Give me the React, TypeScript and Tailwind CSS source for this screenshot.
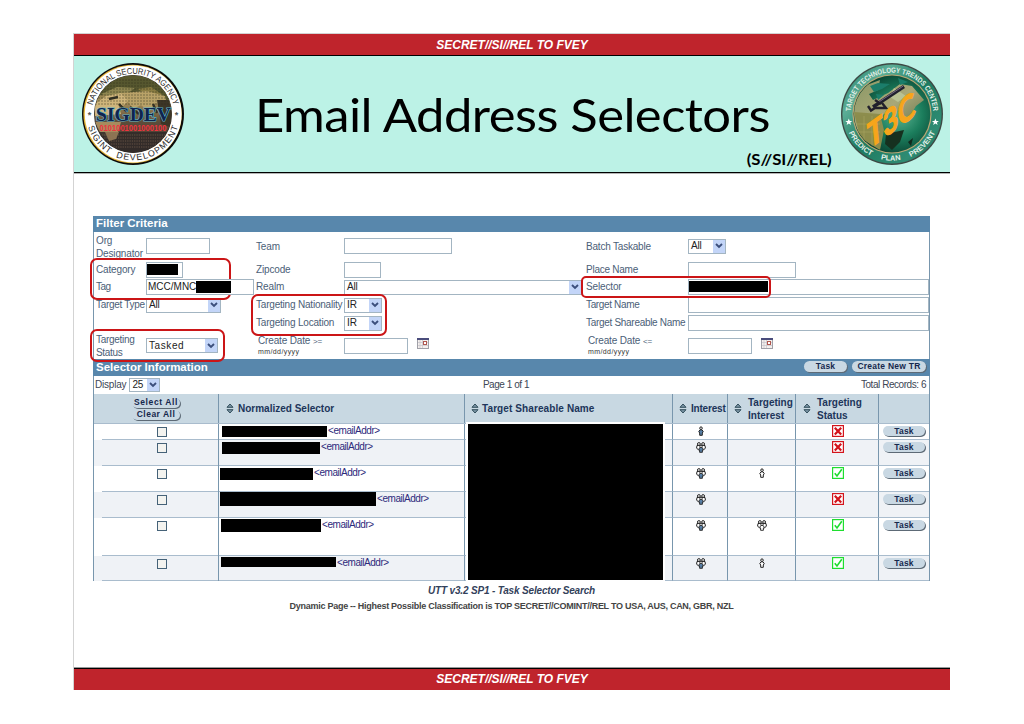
import React from "react";
import clsx from "clsx";

const LABEL = "whitespace-nowrap text-[10px] leading-[12px] text-[#4b6077]";

function Banner({ className }: { className: string }) {
  return (
    <div className={clsx("flex items-center justify-center bg-[#bf242c] text-[12px] font-bold italic leading-none text-white", className)}>
      SECRET//SI//REL TO FVEY
    </div>
  );
}

function SigdevSeal() {
  return (
    <svg viewBox="0 0 104 104" className="h-[104px] w-[104px]">
      <defs>
        <path id="sig-top" d="M12.5 66 A41.5 41.5 0 1 1 91.5 66" />
        <path id="sig-bottom" d="M5.8 59 A46.8 46.8 0 0 0 98.2 59" />
        <linearGradient id="sig-land" x1="0" y1="0" x2="0" y2="1">
          <stop offset="0" stopColor="#6f6a3c" />
          <stop offset="0.35" stopColor="#a58e58" />
          <stop offset="0.6" stopColor="#5d4c3a" />
          <stop offset="1" stopColor="#40332c" />
        </linearGradient>
        <clipPath id="sig-clip"><circle cx="52" cy="52" r="38.5" /></clipPath>
      </defs>
      <circle cx="52" cy="52" r="51" fill="#0b0b0b" />
      <circle cx="51.6" cy="52" r="49.2" fill="#e3b437" />
      <circle cx="52.2" cy="52" r="48.4" fill="#fff" />
      <circle cx="52" cy="52" r="39" fill="#20201c" />
      <g clipPath="url(#sig-clip)">
        <rect x="12" y="12" width="80" height="80" fill="url(#sig-land)" />
        <path d="M12 36 Q30 28 48 31 Q70 28 92 42 L92 12 L12 12Z" fill="#56572f" />
        <path d="M20 32 L36 25 L54 26 L47 31 L31 34Z" fill="#8f8650" />
        <path d="M56 27 L70 25 L82 33 L72 34Z" fill="#8a7c42" />
        <path d="M14 42 L25 34 L40 31 L48 38 L42 44 L37 41 L40 52 L14 54Z" fill="#cfb57b" />
        <path d="M40 31 L66 29 L84 34 L86 43 L74 41 L68 50 L60 43 L52 47 L46 38Z" fill="#b9a268" />
        <path d="M38 42 L46 50 M49 45 L58 52 M72 42 L76 51 M28 37 L37 35" stroke="#333124" strokeWidth="2.4" />
        <path d="M76 38 L92 38 L92 66 L80 62Z" fill="#3c3526" />
        <path d="M14 60 L40 60 L36 74 L30 79 L20 72Z" fill="#a78b5d" />
        <path d="M12 70 H92 V92 H12Z" fill="#2f2928" opacity="0.85" />
        <path d="M24 70 L38 70 L35 77 L28 79Z" fill="#8d7453" />
        {[18, 21, 24, 27, 30, 33, 36, 39, 42].map((y) => (
          <path key={y} d={`M14 ${y} H90`} stroke="#2a2d18" strokeWidth="0.9" strokeDasharray="2 1" opacity="0.5" />
        ))}
        {[73, 76, 79, 82, 85].map((y) => (
          <path key={y} d={`M14 ${y} H90`} stroke="#92765f" strokeWidth="0.9" strokeDasharray="1.3 1" opacity="0.6" />
        ))}
      </g>
      <text x="52.5" y="59.4" textAnchor="middle" textLength="75" lengthAdjust="spacingAndGlyphs" fontFamily="Liberation Serif, serif" fontWeight="700" fontSize="18" fill="#10244f" stroke="#5fb3c4" strokeWidth="1.2" paintOrder="stroke">SIGDEV</text>
      <text x="52" y="69.4" textAnchor="middle" textLength="67" lengthAdjust="spacingAndGlyphs" fontFamily="Liberation Sans, sans-serif" fontWeight="700" fontSize="8.2" fill="#f0323f">0101001001000100</text>
      <text fontFamily="Liberation Sans, sans-serif" fontSize="8.6" fill="#2a2a2a">
        <textPath href="#sig-top" startOffset="50%" textAnchor="middle" textLength="110" lengthAdjust="spacingAndGlyphs">NATIONAL SECURITY AGENCY</textPath>
      </text>
      <text fontFamily="Liberation Sans, sans-serif" fontSize="8.8" fill="#2a2a2a" wordSpacing="3">
        <textPath href="#sig-bottom" startOffset="50%" textAnchor="middle" textLength="120">SIGINT DEVELOPMENT</textPath>
      </text>
      <text x="8.4" y="56" textAnchor="middle" fontFamily="Liberation Sans, sans-serif" fontSize="9" fontWeight="700" fill="#555">*</text>
      <text x="95.6" y="56" textAnchor="middle" fontFamily="Liberation Sans, sans-serif" fontSize="9" fontWeight="700" fill="#555">*</text>
    </svg>
  );
}

function T3cSeal() {
  return (
    <svg viewBox="0 0 104 104" className="h-[104px] w-[104px]">
      <defs>
        <path id="t3c-top" d="M11.5 60 A41.3 41.3 0 1 1 92.5 60" />
        <path id="t3c-bottom" d="M5.2 56 A47 47 0 0 0 98.8 56" />
        <linearGradient id="t3c-ring" x1="0" y1="0" x2="1" y2="1">
          <stop offset="0" stopColor="#1f7a63" />
          <stop offset="0.25" stopColor="#5cae97" />
          <stop offset="0.5" stopColor="#1d7a60" />
          <stop offset="0.8" stopColor="#2f8c73" />
          <stop offset="1" stopColor="#125846" />
        </linearGradient>
        <radialGradient id="t3c-sea" cx="0.6" cy="0.5" r="0.6">
          <stop offset="0" stopColor="#5cb594" />
          <stop offset="0.5" stopColor="#1b7d5c" />
          <stop offset="1" stopColor="#07392b" />
        </radialGradient>
        <linearGradient id="t3c-land" x1="0" y1="0" x2="1" y2="1">
          <stop offset="0" stopColor="#8a9765" />
          <stop offset="0.5" stopColor="#a9a878" />
          <stop offset="1" stopColor="#5b6a46" />
        </linearGradient>
        <clipPath id="t3c-clip"><circle cx="52" cy="52" r="38" /></clipPath>
      </defs>
      <circle cx="52" cy="52" r="51" fill="#3d4944" />
      <circle cx="52" cy="52" r="49.6" fill="url(#t3c-ring)" />
      <circle cx="52" cy="52" r="39.6" fill="#bba774" />
      <circle cx="52" cy="52" r="38.4" fill="url(#t3c-sea)" />
      <g clipPath="url(#t3c-clip)">
        <path d="M14 60 L13 40 L24 24 L40 18 L38 28 L29 32 L33 38 L48 31 L60 22 L72 24 L84 38 L76 44 L70 54 L64 54 L60 48 L44 52 L34 62 L27 74 L18 70Z" fill="url(#t3c-land)" />
        <path d="M14 50 L40 52 L44 68 L40 88 L20 76Z" fill="#8d8d4d" />
        <path d="M46 72 L64 68 L60 80 L52 88 L45 82Z" fill="#16301f" />
        <path d="M68 80 L73 76 L71 84Z" fill="#12291d" />
        <path d="M30 24 L38 21 L50 22 L42 27 L34 30Z M58 16 L68 20 L60 23Z M36 32 L44 33 L38 38Z" fill="#1b7d6a" />
        <path d="M54 26 L66 34 L58 40 L50 35Z" fill="#b9c294" />
        <path d="M14 62 H40 M18 70 H40 M24 54 V82 M32 54 V86" stroke="#c2ba77" strokeWidth="0.5" opacity="0.6" />
      </g>
      <path d="M33 45 L64 24.5" stroke="#20202d" strokeWidth="3.6" />
      <path d="M38 40.5 L63 24.2" stroke="#80728e" strokeWidth="0.9" />
      <path d="M28 44 L31 48.5 L35 46 L46 46 L42 41 M35 38 L41 42" stroke="#22202c" strokeWidth="2.4" fill="none" />
      <g transform="matrix(1 -0.72 0.1 1.05 29 87)" fill="#f6a51b" stroke="#f6a51b" strokeWidth="1.3">
        <text x="0" y="0" fontFamily="Lato, sans-serif" fontWeight="700" fontSize="32" textLength="47" lengthAdjust="spacingAndGlyphs">T3C</text>
      </g>
      <text fontFamily="Liberation Sans, sans-serif" fontSize="7.4" fontWeight="700" fill="#e3f0e8">
        <textPath href="#t3c-top" startOffset="50%" textAnchor="middle" textLength="124" lengthAdjust="spacingAndGlyphs">TARGET TECHNOLOGY TRENDS CENTER</textPath>
      </text>
      <text fontFamily="Liberation Sans, sans-serif" fontSize="7.4" fontWeight="700" fill="#e3f0e8" wordSpacing="8">
        <textPath href="#t3c-bottom" startOffset="50%" textAnchor="middle" textLength="109" lengthAdjust="spacingAndGlyphs">PREDICT PLAN PREVENT</textPath>
      </text>
      {[8.8, 95.4].map((x) => (
        <path key={x} transform={`translate(${x} 60)`} d="M0 -3.6 L1 -1.1 L3.5 -1.1 L1.5 0.6 L2.2 3.1 L0 1.6 L-2.2 3.1 L-1.5 0.6 L-3.5 -1.1 L-1 -1.1Z" fill="#fff" />
      ))}
    </svg>
  );
}

function Field({ className, children }: { className?: string; children?: React.ReactNode }) {
  return <div className={clsx("flex items-center border border-[#a3b5c2] bg-white", className)}>{children}</div>;
}

function Select({ value, className }: { value: string; className?: string }) {
  return (
    <div className={clsx("flex items-center justify-between border border-[#a3b5c2] bg-white pl-[2px] text-[10px] leading-none text-[#222]", className)}>
      <span className="whitespace-nowrap">{value}</span>
      <span className="flex h-full w-[12px] items-center justify-center bg-[#c3d5f8]">
        <svg viewBox="0 0 8 6" className="h-[6px] w-[8px]">
          <path d="M1 1 L4 4 L7 1" fill="none" stroke="#3c4f7c" strokeWidth="1.9" />
        </svg>
      </span>
    </div>
  );
}

function Calendar() {
  return (
    <svg viewBox="0 0 12 11" className="mb-[4px] h-[11px] w-[12px]">
      <rect x="0.5" y="0.5" width="11" height="10" fill="#f4efec" stroke="#a0a0a8" />
      <rect x="0" y="0" width="12" height="2" fill="#4a4d7c" />
      <path d="M3 2V10 M5.5 2V10 M1 4.5H11 M1 7.5H11" stroke="#c4c4cc" strokeWidth="0.7" />
      <rect x="6.5" y="3.5" width="3" height="3" fill="#fff" stroke="#b0574e" strokeWidth="1" />
    </svg>
  );
}

function Pill({ children, className }: { children: string; className?: string }) {
  return (
    <button className={clsx("flex shrink-0 items-center justify-center whitespace-nowrap rounded-full bg-[#c9d8e3] text-[8.5px] font-bold leading-none text-[#16284d] shadow-[1px_1px_0_#5d6a76]", className)}>
      {children}
    </button>
  );
}

function Sort() {
  return (
    <svg viewBox="0 0 8 11" className="h-[11px] w-[8px] shrink-0">
      <path d="M1 4.3 L4 1 L7 4.3Z" fill="#7e98a8" stroke="#25424f" strokeWidth="0.9" />
      <path d="M1 6.7 L4 10 L7 6.7Z" fill="#7e98a8" stroke="#25424f" strokeWidth="0.9" />
    </svg>
  );
}

function Person({ fill }: { fill: string }) {
  return (
    <svg viewBox="0 0 6 10" className="h-[10px] w-[6px]">
      <path d="M2 3.8 H4 L5.2 5.5 L4.3 7 V9.3 H1.7 V7 L0.8 5.5Z" fill={fill} stroke="#222" strokeWidth="1" />
      <circle cx="3" cy="2.2" r="1.3" fill="#fff" stroke="#222" strokeWidth="1" />
    </svg>
  );
}

function People({ fill }: { fill: string }) {
  return (
    <svg viewBox="0 0 10 11" className="h-[11px] w-[10px]">
      <path d="M1 3.5 H9 L9.4 6 L7.5 8 H2.5 L0.6 6Z" fill="#fff" stroke="#222" strokeWidth="1" />
      <circle cx="2.9" cy="2" r="1.4" fill="#fff" stroke="#222" strokeWidth="1" />
      <circle cx="7.1" cy="2" r="1.4" fill="#fff" stroke="#222" strokeWidth="1" />
      <path d="M3.8 5.5 H6.2 L7.2 7.2 L6.4 8 V10.3 H3.6 V8 L2.8 7.2Z" fill={fill} stroke="#222" strokeWidth="0.9" />
      <circle cx="5" cy="4.4" r="1.2" fill="#fff" stroke="#222" strokeWidth="0.9" />
    </svg>
  );
}

function Status({ ok }: { ok: boolean }) {
  return (
    <svg viewBox="0 0 12 12" className="h-[12px] w-[12px]">
      <rect x="0.6" y="0.6" width="10.8" height="10.8" fill="#fff" stroke={ok ? "#1ede2f" : "#d3141c"} strokeWidth="1.2" />
      {ok ? (
        <path d="M2.8 6.2 L5 9 L9.8 2.3" fill="none" stroke="#1ede2f" strokeWidth="1.6" />
      ) : (
        <path d="M2.8 2.8 L9.2 9.4 M9.2 2.8 L2.8 9.4" fill="none" stroke="#d3141c" strokeWidth="2.2" />
      )}
    </svg>
  );
}

const ROWS = [
  { h: "h-[16px]", bar: "ml-[3px] mt-[2px] h-[11px] w-[105px]", many: false, target: "", ok: false },
  { h: "h-[26px]", bar: "ml-[3px] mt-[2px] h-[12px] w-[98px]", many: true, target: "", ok: false },
  { h: "h-[26px]", bar: "ml-[1px] mt-[2px] h-[12px] w-[93px]", many: true, target: "one", ok: true },
  { h: "h-[26px]", bar: "ml-[1px] h-[14px] w-[156px]", many: true, target: "", ok: false },
  { h: "h-[38px]", bar: "ml-[2px] mt-[1px] h-[13px] w-[100px]", many: true, target: "many", ok: true },
  { h: "h-[25px]", bar: "ml-[2px] mt-[1px] h-[10px] w-[115px]", many: true, target: "one", ok: true },
];

const GRID = "grid grid-cols-[125px_246px_208px_55px_68px_83px_50px]";
const CELL = "flex items-start border-b border-r border-b-[#a9bccd] border-r-[#7896ad]";
const HEAD = "flex items-center border-r border-[#7896ad] text-[10px] font-bold leading-[13px] text-[#20355a]";

function FilterForm() {
  return (
    <div className="grid h-[127px] grid-cols-[52px_110px_88px_242px_102px_241px] grid-rows-[29px_17px_18px_18px_18px_27px] tracking-[-0.15px]">
      <div className={clsx(LABEL, "self-center pl-[2px] leading-[13px]")}>Org<br />Designator</div>
      <Field className="mb-px h-[16px] w-[64px] self-center" />
      <div className={clsx(LABEL, "self-center")}>Team</div>
      <Field className="mb-px h-[16px] w-[108px] self-center" />
      <div className={clsx(LABEL, "self-center tracking-[-0.2px]")}>Batch Taskable</div>
      <Select value="All" className="mb-px h-[15px] w-[38px] self-center" />

      <div className={clsx(LABEL, "self-center pl-[2px] tracking-[-0.15px]")}>Category</div>
      <Field className="h-[16px] w-[37px] self-center"><span className="h-[11px] w-[31px] bg-black" /></Field>
      <div className={clsx(LABEL, "self-center tracking-[-0.15px]")}>Zipcode</div>
      <Field className="h-[16px] w-[37px] self-center" />
      <div className={clsx(LABEL, "self-center tracking-[-0.25px]")}>Place Name</div>
      <Field className="h-[16px] w-[108px] self-center" />

      <div className={clsx(LABEL, "self-center pl-[2px] tracking-[-0.5px]")}>Tag</div>
      <Field className="relative z-20 h-[16px] w-[108px] self-center pl-[1px] text-[10px] leading-none tracking-normal text-[#222]">
        MCC/MNC<span className="h-[12px] w-[35px] bg-black" />
      </Field>
      <div className={clsx(LABEL, "self-center")}>Realm</div>
      <Select value="All" className="h-[15px] w-[238px] self-center" />
      <div className={clsx(LABEL, "self-center")}>Selector</div>
      <Field className="h-[16px] w-[241px] self-center"><span className="mb-px h-[11px] w-[79px] bg-black" /></Field>

      <div className={clsx(LABEL, "self-center pl-[2px] tracking-[-0.3px]")}>Target Type</div>
      <Select value="All" className="h-[15px] w-[75px] self-center" />
      <div className={clsx(LABEL, "self-center tracking-[-0.2px]")}>Targeting Nationality</div>
      <Select value="IR" className="h-[15px] w-[38px] self-center" />
      <div className={clsx(LABEL, "self-center tracking-[-0.35px]")}>Target Name</div>
      <Field className="h-[16px] w-[241px] self-center" />

      <div />
      <div />
      <div className={clsx(LABEL, "self-center tracking-[-0.2px]")}>Targeting Location</div>
      <Select value="IR" className="h-[15px] w-[38px] self-center" />
      <div className={clsx(LABEL, "self-center tracking-[-0.3px]")}>Target Shareable Name</div>
      <Field className="h-[16px] w-[241px] self-center" />

      <div className={clsx(LABEL, "self-center pl-[2px] leading-[13px] tracking-[-0.3px]")}>Targeting<br />Status</div>
      <Select value="Tasked" className="h-[15px] w-[72px] self-center tracking-[0.6px]" />
      <div className={clsx(LABEL, "self-center pl-[2px]")}>
        Create Date <span className="text-[8px]">&gt;=</span>
        <div className="text-[7px] leading-[8px] tracking-[0.4px] text-[#333]">mm/dd/yyyy</div>
      </div>
      <div className="flex items-center gap-[9px]"><Field className="h-[16px] w-[64px]" /><Calendar /></div>
      <div className={clsx(LABEL, "self-center pl-[2px]")}>
        Create Date <span className="text-[8px]">&lt;=</span>
        <div className="text-[7px] leading-[8px] tracking-[0.4px] text-[#333]">mm/dd/yyyy</div>
      </div>
      <div className="flex items-center gap-[9px]"><Field className="h-[16px] w-[64px]" /><Calendar /></div>
    </div>
  );
}

export default function App() {
  return (
    <div className="h-[724px] w-[1024px] overflow-hidden bg-white pl-[73px] pt-[33px] font-['Liberation_Sans',sans-serif]">
      <div className="flex h-[657px] w-[877px] flex-col border-l border-t border-[#d3d3d3]">
        <Banner className="h-[21px] pt-px" />
        <header className="flex h-[118px] border-y border-black bg-[#bcf2e6] shadow-[0_1px_0_#b5b5b5]">
          <div className="w-[150px] pl-[7px] pt-[6px]"><SigdevSeal /></div>
          <div className="flex w-[608px] flex-col font-['Lato',sans-serif] text-black">
            <h1 className="ml-[31px] mt-[29px] origin-left scale-x-[1.08] self-start whitespace-nowrap text-[47px] leading-[58px] tracking-[-0.5px]">Email Address Selectors</h1>
            <div className="mt-[7px] origin-right scale-x-[1.08] self-end whitespace-nowrap text-[15.5px] font-bold leading-[18px]">(S//SI//REL)</div>
          </div>
          <div className="pl-[8px] pt-[6px]"><T3cSeal /></div>
        </header>

        <main className="flex h-[495px] flex-col pl-[19px] pt-[43px]">
          <div className="relative flex w-[837px] flex-col">
            <div className="flex h-[16px] items-center bg-[#5887ac] pl-[3px] text-[11.5px] font-bold leading-none text-white">Filter Criteria</div>
            <div className="border-x border-[#7896ad]"><FilterForm /></div>
            <div className="flex h-[17px] items-center bg-[#5887ac] pl-[3px] pr-[4px]">
              <span className="grow text-[11.5px] font-bold leading-none text-white">Selector Information</span>
              <Pill className="mb-[2px] h-[11px] w-[43px] tracking-[0.2px]">Task</Pill>
              <Pill className="mb-[2px] ml-[5px] h-[11px] w-[74px] tracking-[0.25px]">Create New TR</Pill>
            </div>
            <div className="grid h-[18px] grid-cols-[1fr_auto_1fr] items-center border-x border-[#7896ad] text-[10px] leading-none text-[#3c4654]">
              <div className="flex items-center gap-[3px] pl-px tracking-[-0.2px]">Display <Select value="25" className="h-[14px] w-[31px]" /></div>
              <div className="mr-[11px] tracking-[-0.45px]">Page 1 of 1</div>
              <div className="pr-[3px] text-right tracking-[-0.45px]">Total Records: 6</div>
            </div>

            <div className="border-x border-[#7896ad]">
              <div className={clsx(GRID, "h-[30px] border-b border-[#a9bccd] bg-[#c8d8e2]")}>
                <div className={clsx(HEAD, "flex-col justify-center gap-[2px]")}>
                  <Pill className="h-[10px] w-[48px] tracking-[0.6px]">Select All</Pill>
                  <Pill className="h-[10px] w-[48px] tracking-[0.5px]">Clear All</Pill>
                </div>
                <div className={clsx(HEAD, "gap-[4px] pl-[7px]")}><Sort />Normalized Selector</div>
                <div className={clsx(HEAD, "gap-[3px] pl-[6px] tracking-[0.1px]")}><Sort />Target Shareable Name</div>
                <div className={clsx(HEAD, "gap-[4px] pl-[6px] tracking-[-0.2px]")}><Sort />Interest</div>
                <div className={clsx(HEAD, "gap-[6px] pl-[6px]")}><Sort /><span>Targeting Interest</span></div>
                <div className={clsx(HEAD, "gap-[6px] pl-[7px]")}><Sort /><span>Targeting<br />Status</span></div>
                <div />
              </div>
              {ROWS.map((row, i) => (
                <div key={i} className={clsx(GRID, row.h, i % 2 ? "bg-[#eff2f6]" : "bg-white")}>
                  <div className="border-r border-[#7896ad] pl-[8px]">
                    <div className="h-full border-b border-[#a9bccd] pl-[55px] pt-[3px]">
                      <div className="h-[10px] w-[10px] border border-[#456278] bg-[#f3f3ef]" />
                    </div>
                  </div>
                  <div className={CELL}>
                    <span className={clsx("bg-black", row.bar)} />
                    <span className="ml-px mt-px text-[10px] leading-[11px] tracking-[-0.45px] text-[#2c2a7b]">&lt;emailAddr&gt;</span>
                  </div>
                  <div className={CELL} />
                  <div className={clsx(CELL, "justify-center pl-[2px] pt-[2px]")}>{row.many ? <People fill="#587fa5" /> : <Person fill="#587fa5" />}</div>
                  <div className={clsx(CELL, "justify-center pl-px pt-[2px]")}>
                    {row.target === "one" && <Person fill="#fff" />}
                    {row.target === "many" && <People fill="#fff" />}
                  </div>
                  <div className={clsx(CELL, "justify-center pl-[2px] pt-px")}><Status ok={row.ok} /></div>
                  <div className="flex items-start border-b border-[#a9bccd] pl-[4px] pt-[2px]">
                    <Pill className="h-[10px] w-[42px] tracking-[0.2px]">Task</Pill>
                  </div>
                </div>
              ))}
            </div>

            <div className="absolute left-[373px] top-[206px] h-[160px] w-[199px] border-2 border-white bg-black" />
            <div className="absolute left-[-3px] top-[42px] z-10 h-[42px] w-[141px] rounded-[7px] border-2 border-[#cb1517]" />
            <div className="absolute left-[158px] top-[78px] z-10 h-[42px] w-[136px] rounded-[7px] border-2 border-[#cb1517]" />
            <div className="absolute left-[488px] top-[60px] z-10 h-[22px] w-[190px] rounded-[5px] border-2 border-[#cb1517]" />
            <div className="absolute left-[-3px] top-[113px] z-10 h-[33px] w-[135px] rounded-[7px] border-2 border-[#cb1517]" />
          </div>
          <div className="mt-[4px] w-[837px] text-center text-[10px] font-bold italic leading-[12px] tracking-[-0.17px] text-[#33415a]">UTT v3.2 SP1 - Task Selector Search</div>
          <div className="mt-[3px] w-[837px] text-center text-[9px] font-bold leading-[12px] tracking-[-0.27px] text-[#444]">Dynamic Page -- Highest Possible Classification is TOP SECRET//COMINT//REL TO USA, AUS, CAN, GBR, NZL</div>
        </main>
        <Banner className="h-[22px] border-t border-black pb-px shadow-[0_-1px_0_#999]" />
      </div>
    </div>
  );
}
